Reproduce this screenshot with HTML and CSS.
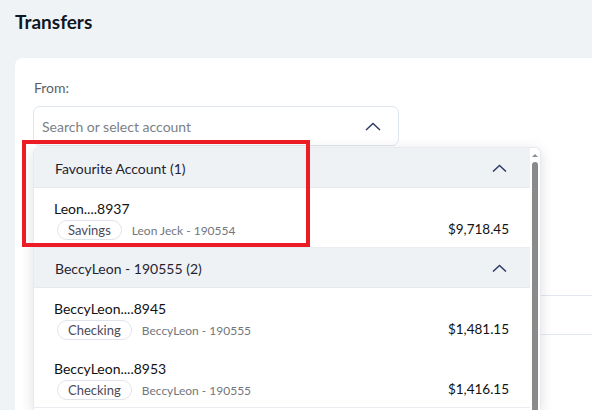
FILE: index.html
```html
<!DOCTYPE html>
<html lang="en">
<head>
<meta charset="utf-8">
<title>Transfers</title>
<link rel="stylesheet" href="styles.css">
</head>
<body>
<div class="page">
  <h1 class="title">Transfers</h1>
  <section class="card">
    <label class="field-label">From:</label>
    <div class="select">
      <span class="select-placeholder">Search or select account</span>
      <svg class="chev" width="16" height="9" viewBox="0 0 16 9"><polyline points="1,8 8,1.5 15,8" fill="none" stroke="#2d3b66" stroke-width="1.5"/></svg>
    </div>
    <div class="form-rows">
      <div class="form-row"></div>
    </div>

    <div class="dropdown">
      <div class="list">
        <div class="group-head">
          <span>Favourite Account (1)</span>
          <svg class="chev" width="15" height="8" viewBox="0 0 15 8"><polyline points="1,7.5 7.5,1.5 14,7.5" fill="none" stroke="#2d3b66" stroke-width="1.5"/></svg>
        </div>
        <div class="account">
          <div class="acc-main">
            <div class="acc-name">Leon....8937</div>
            <div class="acc-meta"><span class="pill">Savings</span><span class="owner">Leon Jeck - 190554</span></div>
          </div>
          <div class="amount">$9,718.45</div>
        </div>
        <div class="group-head">
          <span>BeccyLeon - 190555 (2)</span>
          <svg class="chev" width="15" height="8" viewBox="0 0 15 8"><polyline points="1,7.5 7.5,1.5 14,7.5" fill="none" stroke="#2d3b66" stroke-width="1.5"/></svg>
        </div>
        <div class="account plain">
          <div class="acc-main">
            <div class="acc-name">BeccyLeon....8945</div>
            <div class="acc-meta"><span class="pill">Checking</span><span class="owner">BeccyLeon - 190555</span></div>
          </div>
          <div class="amount">$1,481.15</div>
        </div>
        <div class="account">
          <div class="acc-main">
            <div class="acc-name">BeccyLeon....8953</div>
            <div class="acc-meta"><span class="pill">Checking</span><span class="owner">BeccyLeon - 190555</span></div>
          </div>
          <div class="amount">$1,416.15</div>
        </div>
      </div>
      <div class="scrollbar">
        <span class="scroll-arrow"></span>
        <span class="scroll-thumb"></span>
      </div>
    </div>
  </section>
  <div class="highlight"></div>
</div>
</body>
</html>
```

FILE: styles.css
```css
html, body {
  margin: 0;
  height: 100%;
  overflow: hidden;
}

body {
  background: #f0f3f6;
  font-family: Lato, "Noto Sans", sans-serif;
  color: #1d1f24;
}

.page {
  position: relative;
  height: 100%;
  box-sizing: border-box;
  padding: 10px 0 0 15px;
  display: flex;
  flex-direction: column;
}

.title {
  margin: 0;
  font-size: 19px;
  line-height: 24px;
  font-weight: 700;
  color: #0f1722;
}

.card {
  position: relative;
  margin-top: 24px;
  flex: 1;
  background: #fff;
  border-radius: 8px 0 0 0;
  padding: 21px 0 0 18px;
  box-sizing: border-box;
  overflow: hidden;
}

.field-label {
  display: block;
  font-size: 14px;
  line-height: 18px;
  color: #5b5f66;
  margin-left: 1px;
}

.select {
  margin-top: 9px;
  width: 366px;
  height: 40px;
  box-sizing: border-box;
  border: 1px solid #dfe5ec;
  border-radius: 7px;
  display: flex;
  align-items: center;
  justify-content: space-between;
  padding: 0 17px 0 8px;
}

.select-placeholder {
  font-size: 14px;
  color: #7b7f86;
}

.chev {
  display: block;
}

.form-rows {
  margin-top: 149px;
}

.form-row {
  height: 38px;
  border-top: 1px solid #e3e8ef;
  border-bottom: 1px solid #e3e8ef;
}

/* account picker menu, opened under the select */
.dropdown {
  position: absolute;
  left: 18px;
  top: 89px;
  bottom: 0;
  width: 508px;
  box-sizing: border-box;
  background: #fff;
  border: 1px solid #e7eaef;
  border-bottom: none;
  border-radius: 6px 6px 0 0;
  box-shadow: 0 3px 14px rgba(0, 0, 0, 0.13);
  display: flex;
  overflow: hidden;
}

.list {
  flex: 1;
}

.group-head {
  height: 40px;
  box-sizing: border-box;
  background: #eff2f5;
  border-bottom: 1px solid #e6eaef;
  display: flex;
  align-items: center;
  justify-content: space-between;
  padding: 1px 23px 0 21px;
  font-size: 14px;
  color: #1f2430;
}

.account {
  height: 60px;
  box-sizing: border-box;
  display: flex;
  justify-content: space-between;
  padding: 12px 21px 0 20px;
  border-bottom: 1px solid #e9edf1;
}

.account.plain {
  border-bottom: none;
}

.acc-name {
  font-size: 14px;
  line-height: 18px;
  color: #111;
}

.acc-meta {
  margin-top: 2px;
  display: flex;
  align-items: center;
  gap: 10px;
}

.pill {
  margin-left: 3px;
  height: 20px;
  box-sizing: border-box;
  border: 1px solid #dfe4eb;
  border-radius: 10px;
  padding: 0 10px;
  font-size: 13px;
  line-height: 18px;
  color: #4b4a5a;
}

.owner {
  font-size: 12px;
  color: #72767d;
}

.amount {
  align-self: center;
  margin-top: 10px;
  font-size: 13.5px;
  color: #111;
}

.scrollbar {
  width: 10px;
  display: flex;
  flex-direction: column;
  align-items: center;
  padding-top: 6px;
}

.scroll-arrow {
  width: 0;
  height: 0;
  border-left: 3px solid transparent;
  border-right: 3px solid transparent;
  border-bottom: 3px solid #8c8c8c;
}

.scroll-thumb {
  margin-top: 5px;
  width: 6px;
  flex: 1;
  background: #8a8a8a;
  border-radius: 3px 3px 0 0;
}

/* red annotation frame around the favourite account */
.highlight {
  position: absolute;
  left: 22px;
  top: 140px;
  width: 288px;
  height: 107px;
  box-sizing: border-box;
  border: 4px solid #ec1c24;
}
```
